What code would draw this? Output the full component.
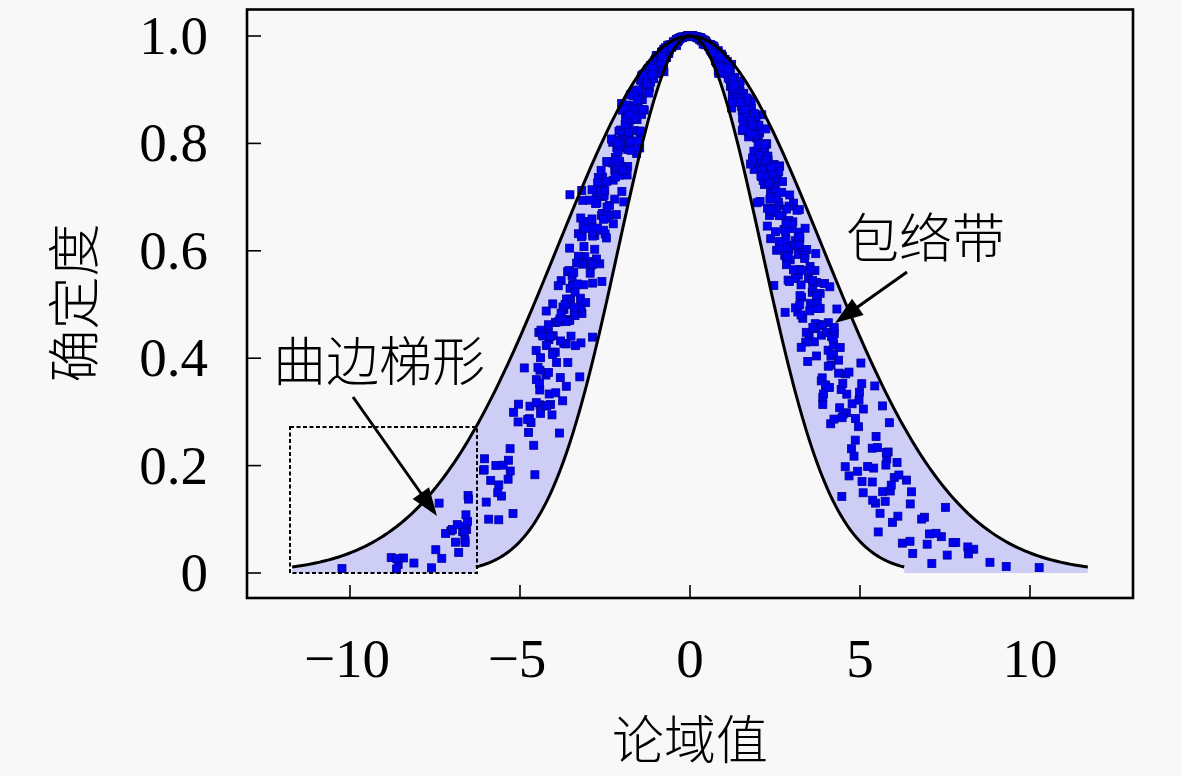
import React from "react";

const X0 = 690;
const SX = 34;
const Y0 = 573;
const SY = 537;
const px = (x: number) => X0 + x * SX;
const py = (y: number) => Y0 - y * SY;

const EN = 3;
const HE = 0.3;
const SO = EN + 3 * HE;
const SI = EN - 3 * HE;

function mulberry32(a: number) {
  return function () {
    a |= 0;
    a = (a + 0x6d2b79f5) | 0;
    let t = Math.imul(a ^ (a >>> 15), 1 | a);
    t = (t + Math.imul(t ^ (t >>> 7), 61 | t)) ^ t;
    return ((t ^ (t >>> 14)) >>> 0) / 4294967296;
  };
}
const rnd = mulberry32(20240611);
const randn = () => {
  let u = 0;
  let v = 0;
  while (u === 0) u = rnd();
  while (v === 0) v = rnd();
  return Math.sqrt(-2 * Math.log(u)) * Math.cos(2 * Math.PI * v);
};

const drops: { x: number; y: number }[] = [];
for (let i = 0; i < 1000; i++) {
  const enp = EN + HE * randn();
  const x = enp * randn();
  const y = Math.exp(-(x * x) / (2 * enp * enp));
  drops.push({ x, y });
}

const gauss = (s: number, x: number) => Math.exp(-(x * x) / (2 * s * s));

function curvePts(s: number, lim: number, n = 240) {
  const pts: [number, number][] = [];
  for (let i = 0; i <= n; i++) {
    const x = -lim + (2 * lim * i) / n;
    pts.push([px(x), py(gauss(s, x))]);
  }
  return pts;
}

const outer = curvePts(SO, 3 * SO);
const inner = curvePts(SI, 3 * SI);
const toPath = (pts: [number, number][]) =>
  pts.map((p, i) => `${i === 0 ? "M" : "L"}${p[0].toFixed(2)},${p[1].toFixed(2)}`).join(" ");

const fillPath =
  toPath(outer) +
  ` L${px(3 * SO).toFixed(2)},${py(0)} L${px(3 * SI).toFixed(2)},${py(0)} ` +
  inner
    .slice()
    .reverse()
    .map((p) => `L${p[0].toFixed(2)},${p[1].toFixed(2)}`)
    .join(" ") +
  ` L${px(-3 * SI).toFixed(2)},${py(0)} L${px(-3 * SO).toFixed(2)},${py(0)} Z`;

function Arrow({ x1, y1, x2, y2 }: { x1: number; y1: number; x2: number; y2: number }) {
  const dx = x2 - x1;
  const dy = y2 - y1;
  const len = Math.hypot(dx, dy);
  const ux = dx / len;
  const uy = dy / len;
  const hl = 28;
  const hw = 10;
  const bx = x2 - hl * ux;
  const by = y2 - hl * uy;
  const nx = -uy;
  const ny = ux;
  return (
    <g>
      <line x1={x1} y1={y1} x2={bx + 2 * ux} y2={by + 2 * uy} stroke="#000" strokeWidth={3} />
      <polygon
        points={`${x2},${y2} ${bx + hw * nx},${by + hw * ny} ${bx - hw * nx},${by - hw * ny}`}
        fill="#000"
      />
    </g>
  );
}

const NUM_FONT = "'Liberation Serif', 'DejaVu Serif', serif";
const CJK_FONT = "'Noto Sans CJK SC', 'Noto Sans', sans-serif";

export default function App() {
  const yTicks = [
    { v: 0, t: "0" },
    { v: 0.2, t: "0.2" },
    { v: 0.4, t: "0.4" },
    { v: 0.6, t: "0.6" },
    { v: 0.8, t: "0.8" },
    { v: 1.0, t: "1.0" },
  ];
  const xTicks = [
    { v: -10, t: "\u221210" },
    { v: -5, t: "\u22125" },
    { v: 0, t: "0" },
    { v: 5, t: "5" },
    { v: 10, t: "10" },
  ];
  return (
    <div className="w-[1181px] h-[776px] bg-[#f8f8f8] overflow-hidden">
      <svg width={1181} height={776} viewBox="0 0 1181 776" className="block">
        <path d={fillPath} fill="#cdcdf6" stroke="none" />
        {drops.map((d, i) => (
          <rect
            key={i}
            x={px(d.x) - 4}
            y={py(d.y) - 4}
            width={8}
            height={8}
            fill="#0000f5"
            stroke="#00009a"
            strokeWidth={0.8}
          />
        ))}
        <path d={toPath(outer)} fill="none" stroke="#000" strokeWidth={3} strokeLinejoin="round" />
        <path d={toPath(inner)} fill="none" stroke="#000" strokeWidth={3} strokeLinejoin="round" />

        <rect
          x={290}
          y={427}
          width={187}
          height={146}
          fill="none"
          stroke="#000"
          strokeWidth={2}
          strokeDasharray="4 2.5"
        />

        <Arrow x1={353} y1={397} x2={437} y2={516} />
        <Arrow x1={907} y1={272} x2={835} y2={323} />

        <rect x={247} y={9.5} width={886} height={588.5} fill="none" stroke="#000" strokeWidth={2.6} />
        {yTicks.map((t) => (
          <g key={t.t}>
            <line x1={247} y1={py(t.v)} x2={261} y2={py(t.v)} stroke="#000" strokeWidth={1.6} />
            <text
              x={208}
              y={py(t.v) + 18}
              textAnchor="end"
              fontFamily={NUM_FONT}
              fontSize={55}
              fill="#000"
            >
              {t.t}
            </text>
          </g>
        ))}
        {xTicks.map((t) => (
          <g key={t.t}>
            <line x1={px(t.v)} y1={598} x2={px(t.v)} y2={585} stroke="#000" strokeWidth={1.6} />
            <text
              x={px(t.v) - (t.v < 0 ? 3 : 0)}
              y={677}
              textAnchor="middle"
              fontFamily={NUM_FONT}
              fontSize={55}
              fill="#000"
            >
              {t.t}
            </text>
          </g>
        ))}

        <text x={690} y={759} textAnchor="middle" fontFamily={CJK_FONT} fontSize={52} fontWeight={300} fill="#000">
          论域值
        </text>
        <text
          x={0}
          y={0}
          transform="translate(94,303) rotate(-90)"
          textAnchor="middle"
          fontFamily={CJK_FONT}
          fontSize={53}
          fontWeight={300}
          fill="#000"
        >
          确定度
        </text>
        <text x={273} y={381} fontFamily={CJK_FONT} fontSize={53} fontWeight={300} fill="#000">
          曲边梯形
        </text>
        <text x={846} y={258} fontFamily={CJK_FONT} fontSize={53} fontWeight={300} fill="#000">
          包络带
        </text>
      </svg>
    </div>
  );
}
